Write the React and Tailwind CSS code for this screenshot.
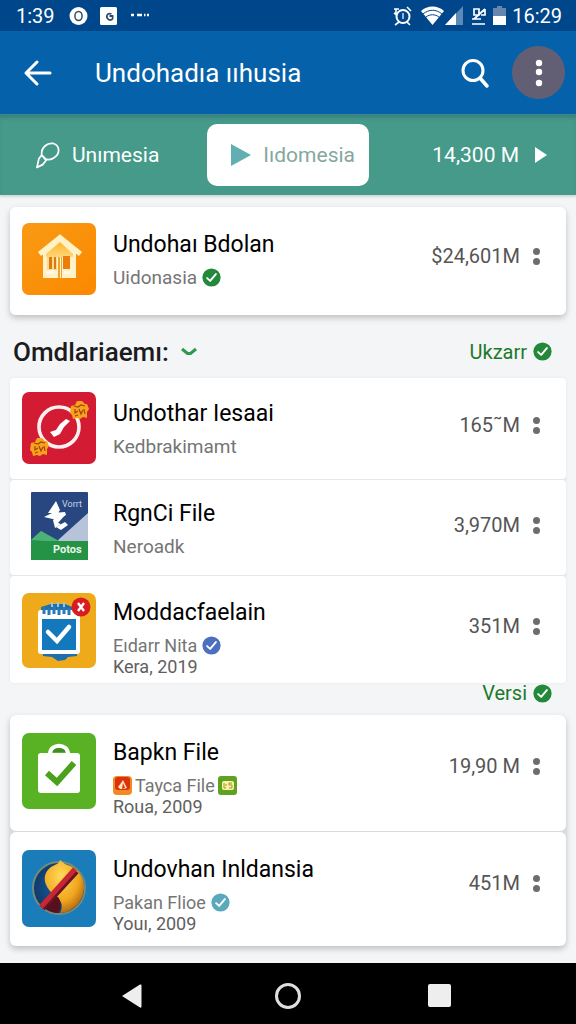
import { useState } from 'react';

const CheckBadge = ({ color = '#23893a', className = 'size-[19px]' }) => (
  <svg viewBox="0 0 20 20" className={className} aria-hidden="true">
    <circle cx="10" cy="10" r="9.6" fill={color} />
    <path d="M5.4 10.6l3.2 3 6-7.2" fill="none" stroke="#fff" strokeWidth="2" strokeLinecap="round" strokeLinejoin="round" />
  </svg>
);

const HouseIcon = () => (
  <svg viewBox="0 0 74 72" className="w-[74px] h-[72px]" aria-hidden="true">
    <defs>
      <linearGradient id="house-bg" x1="0" y1="0" x2="1" y2="1"><stop offset="0" stopColor="#f99a14" /><stop offset="1" stopColor="#fb8800" /></linearGradient>
      <linearGradient id="house-front" x1="0" y1="0" x2="0" y2="1"><stop offset="0" stopColor="#fdb72b" /><stop offset="1" stopColor="#ffd678" /></linearGradient>
    </defs>
    <rect width="74" height="72" rx="7" fill="url(#house-bg)" />
    <path d="M21 29L38 16l16 13v26H21z" fill="#fff1c8" />
    <path d="M24 31l14-12 13 12v3H24z" fill="url(#house-front)" />
    <path d="M25 34h10v13H25z" fill="#ffd98a" />
    <path d="M27 34h3v12h-3zM32 34h2v12h-2z" fill="#d97a10" />
    <path d="M41 33h7v13h-7z" fill="#ee7d08" />
    <path d="M36 34h4v21h-4z" fill="#efa535" />
    <path d="M38 34h1v21h-1z" fill="#fff1c8" />
    <path d="M25 47h7v4h-7zM42 48h7v3h-7z" fill="#fff8e3" />
    <path d="M17.500 31L38 14.500 58.500 31" fill="none" stroke="#fff2c4" strokeWidth="5" />
  </svg>
);

const Critter = ({ x, y }) => (
  <g transform={`translate(${x} ${y})`}>
    <path d="M1 5l4-1 2-4h5l3 3h2l2 5-2 3v6l-4-1-3 2-3-1-4 1-1-4-2-2z" fill="#f9a21b" />
    <path d="M4 5l4 1 3-2 4 1M5 8v4l3-2M9 8l2 5 2-4M14 8l1 5M5 15l3-1" fill="none" stroke="#9d430d" strokeWidth="1.200" />
  </g>
);

const GaugeIcon = () => (
  <svg viewBox="0 0 74 72" className="w-[74px] h-[72px]" aria-hidden="true">
    <rect width="74" height="72" rx="7" fill="#d31c33" />
    <circle cx="37" cy="35" r="20" fill="none" stroke="#fff0f0" strokeWidth="3.600" />
    <path d="M44 27l4 2-6 6-4 7-6 3-4-5 6-2 4-6z" fill="#fff" />
    <Critter x="48" y="9" />
    <Critter x="8" y="46" />
  </svg>
);

const PeakIcon = () => (
  <svg viewBox="0 0 57 68" className="w-[57px] h-[68px]" aria-hidden="true">
    <rect width="57" height="68" rx="1" fill="#28467f" />
    <path d="M57 21v28H26z" fill="#b7c3d8" />
    <path d="M0 48l10-9 18 10h29v19H0z" fill="#249346" />
    <path d="M0 48l10-9 18 10H14z" fill="#4cb27a" />
    <path d="M25 9l4 9-2 3H17zM13 25l8-4 13-1 1 3-9 5z" fill="#fff" />
    <path d="M22 28l5-4 8-2-8 9 3 1-6 4z" fill="#fff" />
    <path d="M25 35l9-5 3 3-7 5z" fill="#fff" />
    <text x="31" y="15" fontSize="9" fill="#c7d3ea" fontFamily="Roboto">Vorrt</text>
    <text x="22" y="61" fontSize="11" fontWeight="700" fill="#e8f7e8" fontFamily="Roboto">Potos</text>
  </svg>
);

const PlannerIcon = () => (
  <svg viewBox="0 0 74 75" className="w-[74px] h-[75px]" aria-hidden="true">
    <rect width="74" height="75" rx="7" fill="#efaa1b" />
    <path d="M19 14l10-3h14l12 5v47l-9 1-3 3-7 1-6-4-9-1z" fill="#1d70ad" />
    <rect x="16" y="17" width="42" height="44" rx="3" fill="#fff" />
    <rect x="20" y="26" width="34" height="31" fill="#1478bc" />
    <path d="M22 14v7M27 15v7M32 13v8M37 15v7M42 13v8M47 15v7" stroke="#2a78b4" strokeWidth="3" />
    <path d="M30 9v5M36 9v5M42 9v5" stroke="#9bc4e0" strokeWidth="2" />
    <path d="M26 39l9 9 12-14" fill="none" stroke="#fff" strokeWidth="4.500" strokeLinecap="round" />
    <circle cx="59" cy="14" r="9.500" fill="#d91c20" />
    <path d="M56 10l6 8M62 10l-6 8" stroke="#fff" strokeWidth="2.400" />
  </svg>
);

const BagIcon = () => (
  <svg viewBox="0 0 74 76" className="w-[74px] h-[76px]" aria-hidden="true">
    <rect width="74" height="76" rx="7" fill="#59b224" />
    <path d="M28 21c0-11 18-11 18 0" fill="none" stroke="#fff" strokeWidth="4" />
    <rect x="16" y="20" width="42" height="40" rx="3" fill="#fff" />
    <path d="M31 19c0-5 12-5 12 0z" fill="#438a28" />
    <path d="M25 40l10 9 17-19" fill="none" stroke="#4ba11c" strokeWidth="6" />
  </svg>
);

const GlobeIcon = () => (
  <svg viewBox="0 0 74 77" className="w-[74px] h-[77px]" aria-hidden="true">
    <defs>
      <radialGradient id="globe-gold" cx="0.400" cy="0.300" r="0.800"><stop offset="0" stopColor="#ffd95a" /><stop offset="0.600" stopColor="#f0a51d" /><stop offset="1" stopColor="#9a5410" /></radialGradient>
      <radialGradient id="globe-blue"><stop offset="0" stopColor="#0d60a8" /><stop offset="1" stopColor="#123967" /></radialGradient>
    </defs>
    <rect width="74" height="77" rx="7" fill="#1a7cb8" />
    <circle cx="37" cy="38" r="26" fill="url(#globe-blue)" stroke="#758c7d" strokeWidth="2" />
    <path d="M38 10l5 4c12 3 19 12 19 23 0 14-10 25-24 26 5-10-1-14-8-20-10-10-9-20-1-26 5-3 8-3 9-7z" fill="url(#globe-gold)" />
    <path d="M20 55c5-5 11-9 16-8 4 5 3 11 0 16-6 0-12-3-16-8z" fill="#56101e" />
    <path d="M20 58l34-37" stroke="#671321" strokeWidth="7" />
    <path d="M19 57l34-38" stroke="#c72632" strokeWidth="5" />
  </svg>
);

const FlameChip = () => (
  <svg viewBox="0 0 19 19" className="size-[19px]" aria-hidden="true">
    <rect width="19" height="19" rx="4" fill="#f28a22" />
    <rect x="2" y="1" width="15" height="13" rx="3" fill="#d93112" />
    <path d="M10 4l4 8-3 1H7l-2-2 3-4z" fill="#ffe0b0" />
    <path d="M10 7l2 5-3 1z" fill="#d93112" />
  </svg>
);

const CoinChip = () => (
  <svg viewBox="0 0 19 19" className="size-[19px]" aria-hidden="true">
    <rect width="19" height="19" rx="3" fill="#5fa122" />
    <rect x="4" y="5" width="12" height="9" rx="2" fill="#fff1a6" />
    <path d="M6 7v5h2M8 8v2M11 7h3M11 7v2h3v3h-3" fill="none" stroke="#9a9a24" />
  </svg>
);

const groups = [
  [
    { icon: HouseIcon, title: 'Undohaı Bdolan', sub: 'Uidonasia', badge: '#23893a', price: '$24,601M', pad: 'pt-4 pb-5' },
  ],
  [
    { icon: GaugeIcon, title: 'Undothar Iesaai', sub: 'Kedbrakimamt', price: '165˜M', pad: 'pt-3.5 pb-[15px]' },
    { icon: PeakIcon, title: 'RgnCi File', sub: 'Neroadk', price: '3,970M', pad: 'pt-3 pb-[15px]' },
    { icon: PlannerIcon, title: 'Moddacfaelain', sub: 'Eıdarr Nita', badge: '#4d6fc0', note: 'Kera, 2019', price: '351M', pad: 'pt-[17px] pb-1.5' },
  ],
  [
    { icon: BagIcon, title: 'Bapkn File', sub: 'Tayca File', chips: true, note: 'Roua, 2009', price: '19,90 M', pad: 'pt-[18px] pb-3.5' },
    { icon: GlobeIcon, title: 'Undovhan Inldansia', sub: 'Pakan Flioe', badge: '#5aa9bd', note: 'Youı, 2009', price: '451M', pad: 'pt-[18px] pb-3' },
  ],
];

function AppRow({ app, round }) {
  const Icon = app.icon;
  return (
    <li className={`flex items-start bg-white pl-3 pr-[22px] ${round} ${app.pad}`}>
      <div className="w-[74px] shrink-0 flex justify-center"><Icon /></div>
      <div className={`ml-[17px] flex-1 min-w-0 ${app.note ? 'pt-1.5' : 'pt-2'}`}>
        <h3 className="text-[23px] leading-7 text-black whitespace-nowrap">{app.title}</h3>
        <p className={`mt-2 flex items-center leading-[21px] h-[21px] text-[#757575] whitespace-nowrap ${app.note ? 'text-[18px]' : 'text-[19px]'} ${app.chips ? 'gap-[3px]' : 'gap-[5px]'}`}>
          {app.chips && <FlameChip />}
          {app.sub}
          {app.badge && <CheckBadge color={app.badge} />}
          {app.chips && <CoinChip />}
        </p>
        {app.note && <p className="text-[18px] leading-[21px] text-[#606060]">{app.note}</p>}
      </div>
      <div className="flex items-center gap-2 h-[66px]">
        <span className="text-[20px] leading-7 text-[#555]">{app.price}</span>
        <button className="flex flex-col items-center gap-[3px] w-4 pt-px" aria-label={`Options for ${app.title}`}>
          <span className="size-[7px] rounded-full bg-[#6d6d6d]" />
          <span className="size-[7px] rounded-full bg-[#6d6d6d]" />
        </button>
      </div>
    </li>
  );
}

function StatusBar() {
  return (
    <div className="flex items-center h-[31px] pl-4 pr-3.5 bg-[#00468a] text-white text-[20px] leading-7">
      <span>1:39</span>
      <svg viewBox="0 0 84 20" className="ml-3.5 w-[84px] h-5" aria-hidden="true">
        <circle cx="9.500" cy="10" r="9" fill="#fff" />
        <ellipse cx="9.500" cy="10" rx="3.600" ry="4.500" fill="none" stroke="#31496a" strokeWidth="1.500" />
        <rect x="31" y="1" width="17" height="18" rx="1.500" fill="#fff" />
        <path d="M42.500 8c-6-2-6 6-1 6 3 0 2-3 2-4h-3" fill="none" stroke="#31496a" strokeWidth="1.800" />
        <path d="M62 9h3M68 9h5M75 9h1.500M78 9h2" stroke="#fff" strokeWidth="2.600" />
      </svg>
      <svg viewBox="0 0 116 22" className="ml-auto w-[116px] h-[22px]" aria-hidden="true">
        <g fill="none" stroke="#fff" strokeWidth="2">
          <circle cx="11" cy="11.500" r="6.500" />
          <path d="M2 4h5M15 2l4 4M7 17l-4 3M15 17l3 3M2 8l3 2M4 4v5" strokeWidth="1.600" />
          <path d="M11 8v6" stroke="#8fb3dc" />
        </g>
        <path d="M29 6C35 0 46 0 52 6L40.500 20z" fill="#fff" />
        <path d="M31 9c6-5 13-5 19 0M34 12c4-3 9-3 13 0" fill="none" stroke="#00468a" />
        <path d="M53 20L71 1v19z" fill="#5b8ab8" />
        <path d="M53 20L64 8v12z" fill="#fff" />
        <path d="M82 4h5v6h-5zM82 14l11-10M89 10h4v-6M80 14h9M80 19h13" fill="none" stroke="#fff" strokeWidth="1.700" />
        <path d="M101 3h4V1h5v2h4v8h-13z" fill="#6786ad" />
        <path d="M101 11h13v9h-13z" fill="#fff" />
      </svg>
      <span className="ml-1">16:29</span>
    </div>
  );
}

export default function App() {
  const [open, setOpen] = useState(true);
  return (
    <div className="flex flex-col min-h-screen bg-[#f4f5f6] font-[Roboto,'Noto_Sans',sans-serif]">
      <StatusBar />
      <header className="flex items-center h-[83px] pl-[22px] pr-[11px] bg-[#0562aa] text-white">
        <button aria-label="Back">
          <svg viewBox="0 0 32 32" className="size-8" fill="none" stroke="currentColor" strokeWidth="3" strokeLinecap="round" strokeLinejoin="round"><path d="M28 16H4M15 5L4 16l11 11" /></svg>
        </button>
        <h1 className="ml-[41px] text-[26px] leading-8 whitespace-nowrap">Undohadıa ııhusia</h1>
        <button className="ml-auto" aria-label="Search">
          <svg viewBox="0 0 32 32" className="size-8" fill="none" stroke="currentColor" strokeWidth="3" strokeLinecap="round"><circle cx="14" cy="13.500" r="10" /><path d="M21 21l7 8" strokeWidth="3.500" /></svg>
        </button>
        <button className="ml-[21px] size-[53px] rounded-full bg-[#625f74] flex items-center justify-center" aria-label="More options">
          <svg viewBox="0 0 8 28" className="w-2 h-7" fill="currentColor"><circle cx="4" cy="4" r="3.200" /><circle cx="4" cy="13" r="3.200" /><circle cx="4" cy="24" r="3.200" /></svg>
        </button>
      </header>
      <nav className="flex items-center h-[81px] pl-[35px] pr-[29px] bg-[#459a8a] text-white text-[21px] leading-8 whitespace-nowrap border-t border-[#3c8790] shadow-[inset_0_4px_4px_-2px_#347b76,0_2px_2px_#d4d8da]">
        <button className="flex items-center gap-3">
          <svg viewBox="0 0 26 28" className="w-[25px] h-7" fill="none" stroke="currentColor" strokeWidth="1.800" strokeLinejoin="round"><path d="M7 14C6 6 13 1 19 2c7 2 7 10 2 14-4 4-8 3-11 2zM7 14l-3 4-2 9 6-3 4-5z" /></svg>
          Unımesia
        </button>
        <button className="ml-12 flex items-center gap-3 h-[62px] w-[162px] px-6 rounded-[10px] bg-white text-[#85a79f]">
          <svg viewBox="0 0 20 24" className="w-5 h-6 shrink-0" fill="#61afb1"><path d="M0 1l20 11L0 23z" /></svg>
          Iıdomesia
        </button>
        <button className="ml-auto flex items-center gap-4">
          14,300 M
          <svg viewBox="0 0 12 16" className="w-3 h-4" fill="currentColor"><path d="M0 0l12 8-12 8z" /></svg>
        </button>
      </nav>
      <main className="flex-1 px-2.5 pt-3 pb-4">
        <ul className="rounded-md shadow-[0_3px_6px_rgba(0,0,0,0.22)]">
          {groups[0].map(a => <AppRow key={a.title} app={a} round="rounded-md" />)}
        </ul>
        <div className="flex items-center justify-between h-[63px] pt-2.5 pl-[3px] pr-3.5">
          <h2 className="text-[26px] leading-8 font-medium text-[#1c1c20]">
            <button className="flex items-center gap-3" aria-expanded={open} onClick={() => setOpen(o => !o)}>
              Omdlariaemı:
              <svg viewBox="0 0 16 10" className="w-4 h-2.5" fill="none" stroke="#2d9a4b" strokeWidth="3"><path d="M1 2l5.500 4.500h3L15 2" /></svg>
            </button>
          </h2>
          <a href="#ukzarr" className="flex items-center gap-1.5 text-[20px] leading-6 text-[#1c7a2a]">Ukzarr <CheckBadge /></a>
        </div>
        {open && (
          <ul className="rounded-sm shadow-[0_0_3px_rgba(0,0,0,0.06)] flex flex-col gap-px bg-[#e6e7e8]">
            {groups[1].map(a => <AppRow key={a.title} app={a} round="rounded-sm" />)}
          </ul>
        )}
        <div className="flex justify-end h-8 pr-3.5">
          <a href="#versi" className="flex items-center h-5 gap-1.5 text-[20px] leading-5 text-[#1c7a2a]">Versi <CheckBadge /></a>
        </div>
        <ul className="rounded-md shadow-[0_3px_6px_rgba(0,0,0,0.22)] flex flex-col gap-px bg-[#d9dbdd]">
          {groups[2].map(a => <AppRow key={a.title} app={a} round="rounded-md" />)}
        </ul>
      </main>
      <footer className="flex items-center justify-between h-[61px] pl-[121px] pr-[125px] pt-1 bg-black">
        <button aria-label="Back"><svg viewBox="0 0 26 26" className="size-[26px]" fill="#eee"><path d="M1 13L19 1.500q1.500-.5 1.500 1v21q0 1.500-1.500 1z" /></svg></button>
        <button aria-label="Home" className="size-[26px] rounded-full border-[3px] border-[#dedede]" />
        <button aria-label="Recent apps" className="size-[23px] rounded-xs bg-[#eee]" />
      </footer>
    </div>
  );
}
